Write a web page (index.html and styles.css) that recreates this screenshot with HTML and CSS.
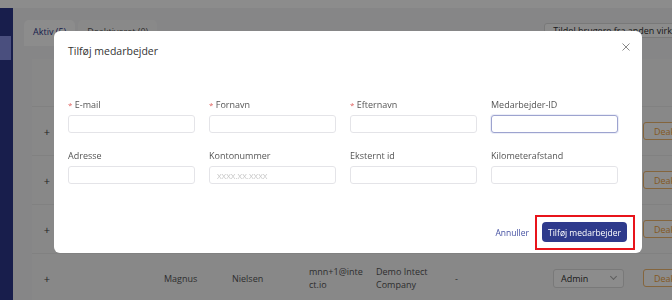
FILE: index.html
```html
<!DOCTYPE html>
<html lang="da">
  <head>
    <meta charset="utf-8">
    <title>Medarbejdere</title>
    <link rel="stylesheet" href="styles.css">
  </head>
  <body>
    <div class="topbar"></div>
    <div class="app">
      <nav class="sidebar">
        <div class="nav-item active"></div>
        <div class="nav-item"></div>
      </nav>
      <main class="main">
        <div class="toolbar">
          <div class="tabs">
            <span class="tab active">Aktiv (5)</span>
            <span class="tab">Deaktiveret (0)</span>
          </div>
          <button class="assign-btn">Tildel brugere fra anden virksomhed</button>
        </div>
        <div class="table">
          <div class="row head">
            <span></span><span></span>
            <span>Fornavn</span><span>Efternavn</span><span>E-mail</span>
            <span>Virksomhed</span><span>Medarbejder-ID</span><span>Rolle</span><span></span>
          </div>
          <div class="row">
            <span class="expand">+</span><span></span>
            <span>Anna</span><span>Jensen</span><span class="cell-email">anj@intect.io</span>
            <span class="cell-company">Demo Intect Company</span><span>-</span>
            <span class="select">Admin <span class="chevron"></span></span>
            <span><button class="deact-btn">Deaktiver</button></span>
          </div>
          <div class="row">
            <span class="expand">+</span><span></span>
            <span>Peter</span><span>Hansen</span><span class="cell-email">pha@intect.io</span>
            <span class="cell-company">Demo Intect Company</span><span>-</span>
            <span class="select">Admin <span class="chevron"></span></span>
            <span><button class="deact-btn">Deaktiver</button></span>
          </div>
          <div class="row">
            <span class="expand">+</span><span></span>
            <span>Sofie</span><span>Larsen</span><span class="cell-email">sla@intect.io</span>
            <span class="cell-company">Demo Intect Company</span><span>-</span>
            <span class="select">Admin <span class="chevron"></span></span>
            <span><button class="deact-btn">Deaktiver</button></span>
          </div>
          <div class="row">
            <span class="expand">+</span><span></span>
            <span>Magnus</span><span>Nielsen</span><span class="cell-email">mnn+1@intect.io</span>
            <span class="cell-company">Demo Intect Company</span><span>-</span>
            <span class="select">Admin <span class="chevron"></span></span>
            <span><button class="deact-btn">Deaktiver</button></span>
          </div>
        </div>
      </main>
    </div>

    <div class="overlay">
      <div class="modal">
        <div class="modal-header">
          <span class="modal-title">Tilføj medarbejder</span>
          <span class="close">
            <svg width="8" height="8" viewBox="0 0 8 8">
              <path d="M0.5 0.5 L7.5 7.5 M7.5 0.5 L0.5 7.5" stroke="#8a8a8a" stroke-width="1" fill="none" />
            </svg>
          </span>
        </div>
        <div class="modal-body">
          <div class="field">
            <label><span class="req">*</span> E-mail</label>
            <input type="text">
          </div>
          <div class="field">
            <label><span class="req">*</span> Fornavn</label>
            <input type="text">
          </div>
          <div class="field">
            <label><span class="req">*</span> Efternavn</label>
            <input type="text">
          </div>
          <div class="field">
            <label>Medarbejder-ID</label>
            <input type="text" class="focused">
          </div>
          <div class="field">
            <label>Adresse</label>
            <input type="text">
          </div>
          <div class="field">
            <label>Kontonummer</label>
            <input type="text" placeholder="XXXX.XX.XXXX">
          </div>
          <div class="field">
            <label>Eksternt id</label>
            <input type="text">
          </div>
          <div class="field">
            <label>Kilometerafstand</label>
            <input type="text">
          </div>
        </div>
        <div class="modal-footer">
          <button class="link-btn">Annuller</button>
          <span class="highlight">
            <button class="primary-btn">Tilføj medarbejder</button>
          </span>
        </div>
      </div>
    </div>
  </body>
</html>
```

FILE: styles.css
```css
* {
  box-sizing: border-box;
}
body {
  margin: 0;
  height: 300px;
  overflow: hidden;
  font-family: "Open Sans", "Noto Sans", sans-serif;
  color: #333;
  background: #f5f5f6;
}
button {
  font-family: inherit;
}
.topbar {
  height: 8px;
  background: #fff;
}
.app {
  display: grid;
  grid-template-columns: 13px 1fr;
  height: 292px;
}
.sidebar {
  background: #2c378a;
  padding-top: 28px;
}
.nav-item {
  height: 24px;
  width: 11px;
}
.nav-item.active {
  background: #8790e6;
}
.main {
  padding: 12px 0 0 11px;
  overflow: hidden;
}
.toolbar {
  display: flex;
  justify-content: space-between;
  align-items: flex-start;
}
.tabs {
  display: flex;
  gap: 3px;
}
.tab {
  padding: 5px 9px 8px;
  font-size: 9px;
  color: #555;
  background: #fafafa;
  border-radius: 5px 5px 0 0;
}
.tab.active {
  color: #2c378a;
  background: #fff;
}
.assign-btn {
  flex-shrink: 0;
  margin: 3px -43px 0 0;
  height: 15px;
  padding: 0 8px;
  font-size: 9px;
  color: #333;
  background: #fff;
  border: 1px solid #ddd;
  border-radius: 3px;
  white-space: nowrap;
}
.table {
  margin-top: 13px;
  margin-left: 8px;
  background: #f7f7f8;
}
.row {
  display: grid;
  grid-template-columns: 30px 102px 68px 77px 67px 79px 97px 91px 1fr;
  align-items: center;
  height: 49px;
  font-size: 9px;
  color: #555;
  border-bottom: 1px solid #ececec;
}
.row.head {
  height: 48px;
  font-weight: 600;
}
.expand {
  text-align: center;
  font-size: 11px;
  color: #444;
}
.cell-email {
  width: 56px;
  word-break: break-all;
  line-height: 13px;
}
.cell-company {
  width: 60px;
  line-height: 13px;
}
.select {
  display: flex;
  align-items: center;
  justify-content: space-between;
  width: 71px;
  height: 19px;
  padding: 0 7px;
  margin-left: 1px;
  font-size: 9px;
  color: #333;
  background: #fff;
  border: 1px solid #dcdcdc;
  border-radius: 3px;
}
.chevron {
  width: 5px;
  height: 5px;
  border-right: 1px solid #aaa;
  border-bottom: 1px solid #aaa;
  transform: translateY(-2px) rotate(45deg);
}
.deact-btn {
  height: 18px;
  padding: 0 10px;
  font-size: 9px;
  color: #f0a33a;
  background: #fff;
  border: 1px solid #f0b870;
  border-radius: 3px;
}

.overlay {
  position: fixed;
  inset: 0;
  padding: 31px 0 0 54px;
  background: rgba(0, 0, 0, 0.45);
}
.modal {
  display: flex;
  flex-direction: column;
  width: 588px;
  height: 222px;
  background: #fff;
  border-radius: 6px;
}
.modal-header {
  display: flex;
  justify-content: space-between;
  align-items: center;
  height: 40px;
  padding: 0 12px 0 14px;
}
.modal-title {
  font-size: 10.5px;
  color: #333;
}
.close {
  display: flex;
  margin-bottom: 8px;
}
.modal-body {
  display: grid;
  grid-template-columns: repeat(4, 127px);
  column-gap: 14px;
  row-gap: 17px;
  padding: 28px 14px 0;
  flex: 1;
  align-content: start;
}
.field {
  display: flex;
  flex-direction: column;
  gap: 4px;
}
.field label {
  height: 12px;
  line-height: 12px;
  font-size: 9px;
  color: #555;
}
.req {
  color: #e0625f;
  font-size: 8px;
}
.field input {
  height: 18px;
  width: 127px;
  padding: 0 7px;
  font-family: inherit;
  font-size: 8px;
  border: 1px solid #e4e4e8;
  border-radius: 3px;
  outline: none;
}
.field input::placeholder {
  color: #c4c4c4;
}
.field input.focused {
  border-color: #9da3cf;
  box-shadow: 0 0 0 1px #eceef8;
}
.modal-footer {
  display: flex;
  justify-content: flex-end;
  align-items: center;
  gap: 6px;
  padding: 0 7px 3px;
}
.link-btn {
  padding: 0;
  font-size: 8.5px;
  color: #4652a3;
  background: none;
  border: none;
}
.highlight {
  display: flex;
  padding: 5px 6px 6px 5px;
  border: 2px solid #e8141b;
}
.primary-btn {
  width: 85px;
  height: 20px;
  padding: 0;
  font-size: 8.5px;
  color: #fff;
  background: #2e3a8c;
  border: none;
  border-radius: 4px;
}
```
